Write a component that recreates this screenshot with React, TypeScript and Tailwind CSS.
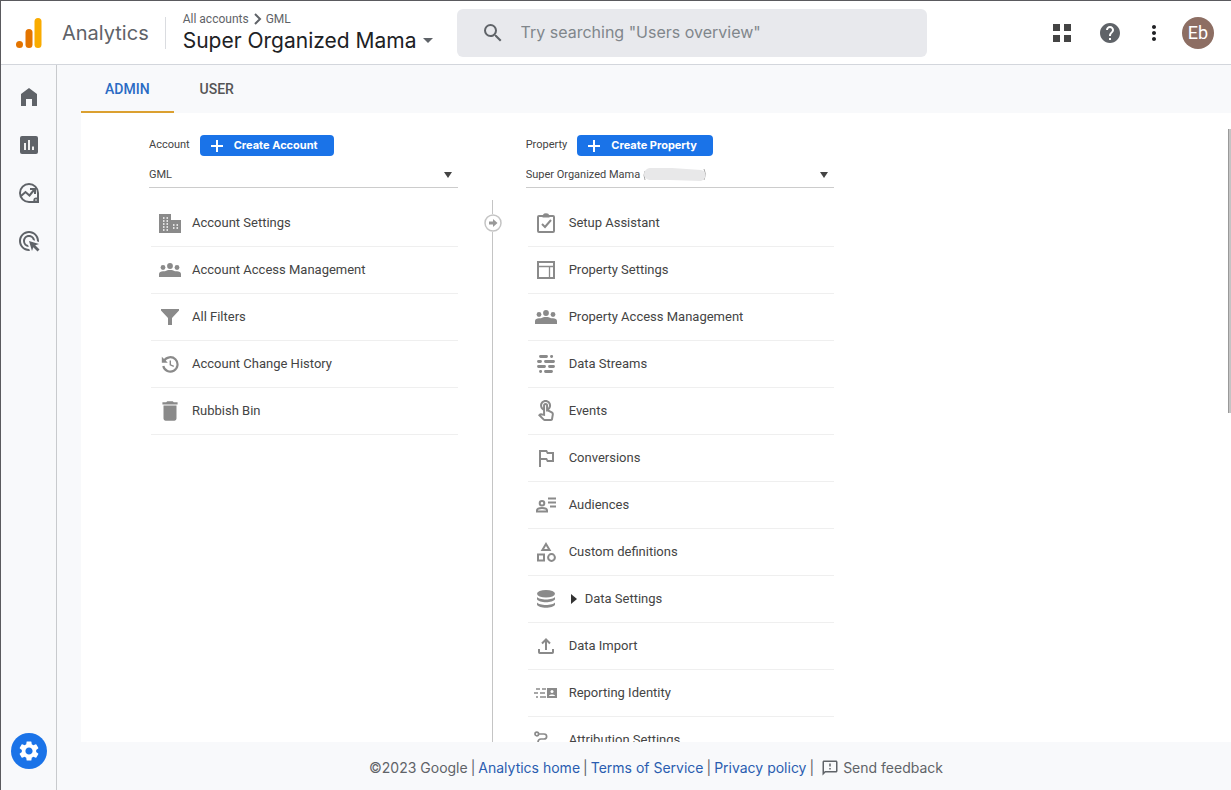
import React, { useState } from 'react';
import {
  MdAdsClick,
  MdDelete,
  MdHelp,
  MdMoreVert,
  MdOutlineFeedback,
  MdOutlinedFlag,
  MdOutlineTouchApp,
  MdSearch,
  MdSettings,
} from 'react-icons/md';

interface MenuEntry {
  label: string;
  icon: React.ReactNode;
  expandable?: boolean;
}

const BuildingIcon = () => (
  <svg width="22" height="19" viewBox="0 0 22 19" fill="currentColor">
    <path d="M0 0h12v6h10v13H0z" />
    <path
      d="M4 4h5M4 7h5M4 10h5M4 13h5M4 16h5M14 11h5M14 14h5"
      stroke="#fff"
      strokeWidth="1.400"
      strokeDasharray="1.500 2"
    />
  </svg>
);

const GroupIcon = () => (
  <svg width="22" height="14" viewBox="0 0 22 14" fill="currentColor">
    <circle cx="4" cy="4.500" r="2.400" />
    <circle cx="18" cy="4.500" r="2.400" />
    <circle cx="11" cy="3" r="2.900" />
    <path d="M0 14v-3c0-2 2-2.800 4-2.800h2C7.500 7.300 9 7 11 7s3.500.3 5 1.200h2c2 0 4 .8 4 2.800v3z" />
  </svg>
);

const FunnelIcon = () => (
  <svg width="18" height="16" viewBox="0 0 18 16" fill="currentColor">
    <path d="M0 0h18v1.500L11 9v7H7V9L0 1.500z" />
  </svg>
);

const HistoryIcon = () => (
  <svg width="18" height="17" viewBox="0 0 18 17" fill="none" stroke="currentColor">
    <path d="M3 5a7.200 7.200 0 1 1-.7 5" strokeWidth="2.200" />
    <path d="M.8.800v5.900h6z" fill="currentColor" stroke="none" />
    <path d="M9.300 4.500v4.300l3.500 1.500" strokeWidth="1.400" />
  </svg>
);

const ClipboardIcon = () => (
  <svg width="18" height="20" viewBox="0 0 18 20" fill="none" stroke="currentColor" strokeWidth="2">
    <rect x="1" y="3" width="16" height="16" rx="1" />
    <path d="M5 11l3 3 6-7" />
    <path d="M5.500 3.500h7M7 2.200C7 .8 11 .8 11 2.200" />
  </svg>
);

const LayoutIcon = () => (
  <svg width="18" height="18" viewBox="0 0 18 18" fill="none" stroke="currentColor">
    <rect x="1" y="1" width="16" height="16" strokeWidth="2" />
    <path d="M1 5.500h16M12.500 5.500V17" strokeWidth="1.300" />
  </svg>
);

const StreamsIcon = () => (
  <svg width="18" height="18" viewBox="0 0 18 18" fill="none" stroke="currentColor" strokeWidth="2.900" strokeLinecap="round">
    <path d="M3.500 1.500h6M14.500 1.500h.2M1.500 6.500h2M8.500 6.500h8M1.500 11.500h6M12.500 11.500h4M3.500 16.500h.2M8.500 16.500h6" />
  </svg>
);

const AudienceIcon = () => (
  <svg width="20" height="16" viewBox="0 0 20 16" fill="none" stroke="currentColor" strokeWidth="2">
    <circle cx="6" cy="6.300" r="2.300" />
    <path d="M1 14.500v-1C1 11.800 3.500 11 6 11s5 .8 5 2.500v1z" />
    <path d="M12 1.500h8M12 5.500h8M14 9.500h6" />
  </svg>
);

const ShapesIcon = () => (
  <svg width="19" height="20" viewBox="0 0 19 20" fill="none" stroke="currentColor" strokeWidth="2">
    <path d="M9 2l3.600 6H5.400z" />
    <rect x="1" y="12.500" width="6" height="6" />
    <circle cx="14.500" cy="15.500" r="3.400" />
  </svg>
);

const DatabaseIcon = () => (
  <svg width="18" height="18" viewBox="0 0 18 18" fill="currentColor">
    <ellipse cx="9" cy="3.800" rx="9" ry="3.800" />
    <path d="M0 7c2 3.300 16 3.300 18 0v2.200c-2 3.900-16 3.900-18 0z" />
    <path d="M0 12.500c2 3.300 16 3.300 18 0v2.200c-2 3.900-16 3.900-18 0z" />
  </svg>
);

const ImportIcon = () => (
  <svg width="16" height="16" viewBox="0 0 16 16" fill="none" stroke="currentColor" strokeWidth="2">
    <path d="M8 12V2M4 5.500l4-4 4 4M1 11v3.200c0 .5.300.8.800.8h12.400c.5 0 .8-.3.800-.8V11" />
  </svg>
);

const IdentityIcon = () => (
  <svg width="24" height="10" viewBox="0 0 24 10" fill="none" stroke="currentColor" strokeWidth="1.600">
    <path d="M2 1h4M8 1h4M0 5h4M6 5h5M2 9h2M6 9h6" />
    <rect x="13" y="0" width="10" height="10" fill="currentColor" stroke="none" />
    <circle cx="18" cy="3.500" r="1.500" fill="#fff" stroke="none" />
    <path d="M15 8c0-2 6-2 6 0z" fill="#fff" stroke="none" />
  </svg>
);

const AttributionIcon = () => (
  <svg width="24" height="20" viewBox="0 0 24 20" fill="none" stroke="currentColor" strokeWidth="1.700">
    <circle cx="2.800" cy="4" r="1.800" />
    <path d="M5 4h5c3.500 0 3.500 5 0 5H7c-4 0-4 7 0 7h9" />
    <circle cx="18.500" cy="16" r="1.800" />
  </svg>
);

const ExploreIcon = () => (
  <svg width="22" height="22" viewBox="0 0 22 22" fill="none" stroke="currentColor" strokeWidth="2">
    <path d="M20 11a9 9 0 1 0-9 9h9z" />
    <path d="M3 14l4.500-4 4 3.500L16 8" />
    <path d="M12 7h5v5" />
    <circle cx="18.200" cy="18.200" r="2.800" fill="currentColor" stroke="none" />
    <circle cx="18" cy="18" r=".8" fill="#fff" stroke="none" />
  </svg>
);

const ReportsIcon = () => (
  <svg width="18" height="18" viewBox="0 0 18 18">
    <rect width="18" height="18" rx="2" fill="currentColor" />
    <path d="M5 7v7M9 4v10M13 10.500V14" stroke="#fff" strokeWidth="1.800" />
  </svg>
);

const HomeIcon = () => (
  <svg width="16" height="18" viewBox="0 0 16 18" fill="currentColor">
    <path d="M0 18V6l8-6 8 6v12h-5v-7H5v7z" />
  </svg>
);

const LogoIcon = () => (
  <svg width="26" height="30" viewBox="0 0 26 30">
    <rect x="18.500" y="0" width="7" height="30" rx="3.500" fill="#f9ab00" />
    <rect x="9.500" y="11" width="7" height="19" rx="3.500" fill="#e37400" />
    <circle cx="3.500" cy="26.500" r="3.500" fill="#e37400" />
  </svg>
);

const accountMenu: MenuEntry[] = [
  { label: 'Account Settings', icon: <BuildingIcon /> },
  { label: 'Account Access Management', icon: <GroupIcon /> },
  { label: 'All Filters', icon: <FunnelIcon /> },
  { label: 'Account Change History', icon: <HistoryIcon /> },
  { label: 'Rubbish Bin', icon: <MdDelete size={26} /> },
];

const propertyMenu: MenuEntry[] = [
  { label: 'Setup Assistant', icon: <ClipboardIcon /> },
  { label: 'Property Settings', icon: <LayoutIcon /> },
  { label: 'Property Access Management', icon: <GroupIcon /> },
  { label: 'Data Streams', icon: <StreamsIcon /> },
  { label: 'Events', icon: <MdOutlineTouchApp size={24} /> },
  { label: 'Conversions', icon: <MdOutlinedFlag size={24} /> },
  { label: 'Audiences', icon: <AudienceIcon /> },
  { label: 'Custom definitions', icon: <ShapesIcon /> },
  { label: 'Data Settings', icon: <DatabaseIcon />, expandable: true },
  { label: 'Data Import', icon: <ImportIcon /> },
  { label: 'Reporting Identity', icon: <IdentityIcon /> },
  { label: 'Attribution Settings', icon: <AttributionIcon /> },
];

const MenuList: React.FC<{ items: MenuEntry[] }> = ({ items }) => (
  <ul className="mt-3 ml-0.5">
    {items.map((item) => (
      <li key={item.label} className="border-b border-[#efefef]">
        <a href="#" className="flex h-[46px] items-center text-[13px] text-[#444]">
          <span className="flex w-[37px] shrink-0 justify-center text-[#8a8a8a]">{item.icon}</span>
          {item.expandable && (
            <svg className="ml-1.5 shrink-0" width="6" height="10" viewBox="0 0 6 10" fill="#333">
              <path d="M0 0l6 5-6 5z" />
            </svg>
          )}
          <span className={item.expandable ? 'ml-2' : 'ml-1'}>{item.label}</span>
        </a>
      </li>
    ))}
  </ul>
);

interface PanelProps {
  title: string;
  value: string;
  items: MenuEntry[];
  hiddenId?: boolean;
}

const Panel: React.FC<PanelProps> = ({ title, value, items, hiddenId }) => {
  const id = title.toLowerCase();
  return (
    <section className="min-w-0">
      <div className="flex h-[21px] items-center gap-2.5">
        <label htmlFor={id} className="text-[11px] text-[#444]">{title}</label>
        <button className="flex h-[21px] items-center gap-2.5 rounded bg-[#1a73e8] pr-4 pl-2.5 font-[Inter,sans-serif] text-[11px] font-bold text-white">
          <svg width="14" height="14" viewBox="0 0 14 14" stroke="currentColor" strokeWidth="2">
            <path d="M7 1v12M1 7h12" />
          </svg>
          Create {title}
        </button>
      </div>
      <div className="relative mt-1.5">
        <select
          id={id}
          defaultValue={value}
          className="block h-[26px] w-full appearance-none border-b border-[#ccc] bg-transparent pt-px text-[11px] text-[#444] outline-none"
        >
          <option>{value}</option>
        </select>
        {hiddenId && (
          <svg className="absolute top-1.5 left-[116px]" width="66" height="14" viewBox="0 0 66 14" fill="none">
            <path d="M3 3Q1 7 3 12M62 1q3 5 0 11" stroke="#aaa" />
            <path d="M8 0h22l29 2c6 1 6 9 0 11l-31-1H9C0 12 0 1 8 0z" fill="#e8e8e9" />
          </svg>
        )}
        <svg className="pointer-events-none absolute top-2.5 right-1.5" width="8" height="6" viewBox="0 0 8 6" fill="#444">
          <path d="M0 0h8L4 6z" />
        </svg>
      </div>
      <MenuList items={items} />
    </section>
  );
};

const Header: React.FC = () => (
  <header className="flex h-16 shrink-0 items-center border-b border-[#d3d6dc] bg-white pr-[17px] pl-[15px] font-[Inter,sans-serif]">
    <LogoIcon />
    <span className="ml-5 text-xl text-[#5f6368]">Analytics</span>
    <div className="ml-4 h-8 w-px bg-[#dadce0]" />
    <div className="ml-[17px] shrink-0">
      <div className="flex items-center gap-1 font-[Roboto,sans-serif] text-xs text-[#5f6368]">
        <a href="#">All accounts</a>
        <svg width="9" height="12" viewBox="0 0 9 12" fill="none" stroke="currentColor" strokeWidth="2">
          <path d="M2 1l5 5-5 5" />
        </svg>
        <a href="#">GML</a>
      </div>
      <button className="flex items-center gap-1.5 text-[21px] leading-7 text-[#202124]">
        Super Organized Mama
        <svg width="10" height="5" viewBox="0 0 10 5" fill="#5f6368">
          <path d="M0 0h10L5 5z" />
        </svg>
      </button>
    </div>
    <label className="ml-6 flex h-12 w-full max-w-[470px] items-center gap-4 rounded-md bg-[#e8e9ed] pl-6">
      <MdSearch size={24} className="shrink-0 text-[#5f6368]" />
      <input
        type="search"
        aria-label="Search"
        placeholder={'Try searching "Users overview"'}
        className="min-w-0 flex-1 bg-transparent pb-0.5 text-base text-[#3c4043] outline-none placeholder:text-[#80868b]"
      />
    </label>
    <div className="ml-auto flex shrink-0 items-center gap-5 pl-4 text-[#5f6368]">
      <button aria-label="Apps" className="mr-[7px]">
        <svg width="18" height="18" viewBox="0 0 18 18" fill="#444">
          <path d="M0 0h7v7H0zM11 0h7v7h-7zM0 11h7v7H0zM11 11h7v7h-7z" />
        </svg>
      </button>
      <button aria-label="Help"><MdHelp size={24} /></button>
      <button aria-label="More" className="text-[#202124]"><MdMoreVert size={24} /></button>
      <button className="-ml-1 flex size-8 items-center justify-center rounded-full bg-[#8d6e63] font-[Roboto,sans-serif] text-lg text-white">
        Eb
      </button>
    </div>
  </header>
);

const Sidebar: React.FC = () => (
  <nav className="flex w-14 shrink-0 flex-col items-center border-r border-[#c8cacd] pt-2 pb-[21px] text-[#5f6368]">
    <a href="#" aria-label="Home" className="flex h-12 items-center"><HomeIcon /></a>
    <a href="#" aria-label="Reports" className="flex h-12 items-center"><ReportsIcon /></a>
    <a href="#" aria-label="Explore" className="flex h-12 items-center"><ExploreIcon /></a>
    <a href="#" aria-label="Advertising" className="flex h-12 items-center"><MdAdsClick size={24} /></a>
    <a
      href="#"
      aria-label="Admin"
      className="mt-auto flex size-9 items-center justify-center rounded-full bg-[#1a73e8] text-white"
    >
      <MdSettings size={24} />
    </a>
  </nav>
);

const Footer: React.FC = () => (
  <footer className="flex h-12 shrink-0 items-center justify-center gap-[3px] pt-1 pl-6 font-[Inter,sans-serif] text-sm text-[#5f6368]">
    <span>©2023 Google</span>
    <span>|</span>
    <a href="#" className="text-[#2a5db0]">Analytics home</a>
    <span>|</span>
    <a href="#" className="text-[#2a5db0]">Terms of Service</a>
    <span>|</span>
    <a href="#" className="text-[#2a5db0]">Privacy policy</a>
    <span>|</span>
    <button className="ml-1 flex items-center gap-1">
      <MdOutlineFeedback size={18} />
      Send feedback
    </button>
  </footer>
);

export default function App() {
  const [tab, setTab] = useState('ADMIN');

  return (
    <div className="flex h-screen flex-col overflow-hidden border-t border-l border-[#5a5a5e] bg-[#f8f9fb] font-[Roboto,sans-serif]">
      <Header />
      <div className="flex min-h-0 flex-1">
        <Sidebar />
        <div className="flex min-w-0 flex-1 flex-col">
          <div className="flex h-12 shrink-0 gap-0.5 pl-6 text-sm font-medium">
            {['ADMIN', 'USER'].map((name) => (
              <button
                key={name}
                onClick={() => setTab(name)}
                className={`border-b-2 px-6 pt-0.5 ${
                  tab === name ? 'border-[#dba030] text-[#2a6bc4]' : 'border-transparent text-[#555]'
                }`}
              >
                {name}
              </button>
            ))}
          </div>
          <main className="relative ml-6 grid min-h-0 flex-1 grid-cols-[1fr_68px_1fr_68px_1fr] overflow-hidden bg-white pt-5.5 pr-5 pl-[68px]">
            <Panel title="Account" value="GML" items={accountMenu} />
            <div className="flex flex-col items-center pt-[65px] pl-0.5">
              <div className="h-3.5 w-px bg-[#c4c4c4]" />
              <svg width="18" height="18" viewBox="0 0 18 18" fill="none">
                <circle cx="9" cy="9" r="8" stroke="#c4c4c4" strokeWidth="1.500" />
                <path d="M5 7.500h4V5l4.500 4L9 13v-2.500H5z" fill="#999" />
              </svg>
              <div className="w-px flex-1 bg-[#c4c4c4]" />
            </div>
            <Panel title="Property" value="Super Organized Mama" items={propertyMenu} hiddenId />
            <div className="absolute top-4 right-0 h-[284px] w-[3px] border-l border-[#999] bg-[#c4c4c4]" />
          </main>
          <Footer />
        </div>
      </div>
    </div>
  );
}
